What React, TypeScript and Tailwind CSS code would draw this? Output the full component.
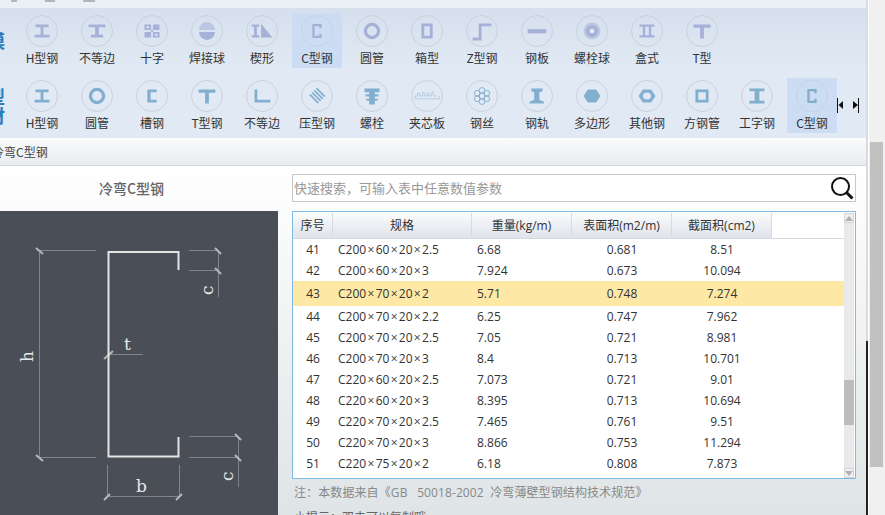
import type { ReactNode } from 'react';

const cjk = 'font-["Noto_Sans_CJK_SC","Noto_Sans",sans-serif]';

// 截面小图标，统一 32x32
const shapes: Record<string, ReactNode> = {
    h: <path d="M9 9h14v3h-5.500v8H24v3H8v-3h6.500v-8H9z" />,
    unequal: <path d="M7 9h18v3h-7v8h4.500v3h-13v-3H14v-8H7z" />,
    cross: <path fillRule="evenodd" d="M8 9h16v14H8zM15 9v14h2V9zM8 15v2h16v-2zM10 11v2h3v-2zM19 19v2h3v-2z" />,
    ball: <>
        <path d="M7.500 15a8.500 8.500 0 0 1 17 0z" opacity="0.55" />
        <path d="M7.500 17a8.500 8.500 0 0 0 17 0z" />
    </>,
    wedge: <path d="M5 9h8v2.500h-2.500v9H13V23H5v-2.500h2.500v-9H5zM15 8l12 15H15z" />,
    c: <path d="M11 8.500h10v4.500h-2.500v-2h-5v10h5v-2H21v4.500H11z" />,
    tube: <circle cx="16" cy="16" r="7" fill="none" stroke="currentColor" strokeWidth="3.5" />,
    box: <path fillRule="evenodd" d="M10 8h12v16H10zM13 11v10h6V11z" />,
    z: <path d="M6 25h6.500V10H26v3h-10.500v15H6z" transform="translate(0 -2)" />,
    plate: <rect x="6" y="14" width="20" height="4.500" />,
    boltball: <>
        <circle cx="16" cy="16" r="9" opacity="0.55" />
        <circle cx="16" cy="16" r="6.500" />
        <circle cx="16" cy="16" r="2.500" fill="#e4ecf5" />
    </>,
    boxbeam: <path d="M8 9h16v2.500h-3.500v9H24V23H8v-2.500h3.500v-9H8zM14 11.500v9h4v-9z" fillRule="evenodd" />,
    t: <path d="M7 9h18v3.500h-7V24h-4V12.500H7z" />,
    channel: <path d="M11 9h10v3h-6.500v8H21v3H11z" />,
    angle: <path d="M8 9h3v11h14v3H8z" />,
    deck: <path transform="translate(32 0) scale(-1 1)" d="M7 16l9-9 1.300 1.300-9 9zM9.300 18.300l9-9 1.300 1.300-9 9zM11.600 20.600l9-9 1.300 1.300-9 9zM13.900 22.900l9-9 1.300 1.300-9 9z" />,
    bolt: <path d="M8 8h16v4H19v2h4v2.500h-4V19h3v2h-3v4h-6v-4h-3v-2h3v-2.500H9V14h4v-2H8z" />,
    sandwich: <path fill="none" stroke="currentColor" strokeWidth="0.8" opacity="0.6" d="M3 19h26M3 16h3v-3h2v3h3v-4h2v4h3v-3h2v3h3v-4h2v4h3M3 19v-3M29 19v-3" />,
    wire: <g fill="none" stroke="currentColor" strokeWidth="1">
        <circle cx="16" cy="16" r="3" /><circle cx="16" cy="10" r="3" /><circle cx="16" cy="22" r="3" />
        <circle cx="10.800" cy="13" r="3" /><circle cx="21.200" cy="13" r="3" />
        <circle cx="10.800" cy="19" r="3" /><circle cx="21.200" cy="19" r="3" />
    </g>,
    rail: <path d="M10 8h12v3l-3.500 1v8l5 2v2H8v-2l5-2v-8l-3-1z" />,
    hex: <path d="M11.500 9h9l4.500 7-4.500 7h-9L7 16z" />,
    hexring: <path fillRule="evenodd" d="M11.500 9h9l4.500 7-4.500 7h-9L7 16zM13.500 12.500l-2.300 3.500 2.300 3.500h5l2.300-3.500-2.300-3.500z" />,
    square: <path fillRule="evenodd" d="M9 9h14v14H9zM12 12v8h8v-8z" />,
    ibeam: <path d="M8 8h16v3h-5.500v10H24v3H8v-3h5.500V11H8z" />,
};

const topRow = [
    ['h', 'H型钢'], ['unequal', '不等边'], ['cross', '十字'], ['ball', '焊接球'], ['wedge', '楔形'],
    ['c', 'C型钢', 1], ['tube', '圆管'], ['box', '箱型'], ['z', 'Z型钢'], ['plate', '钢板'],
    ['boltball', '螺栓球'], ['boxbeam', '盒式'], ['t', 'T型'],
] as [string, string, number?][];

const bottomRow = [
    ['h', 'H型钢'], ['tube', '圆管'], ['channel', '槽钢'], ['t', 'T型钢'], ['angle', '不等边'],
    ['deck', '压型钢'], ['bolt', '螺栓'], ['sandwich', '夹芯板'], ['wire', '钢丝'], ['rail', '钢轨'],
    ['hex', '多边形'], ['hexring', '其他钢'], ['square', '方钢管'], ['ibeam', '工字钢'], ['c', 'C型钢', 1],
] as [string, string, number?][];

const rows = [
    ['41', 'C200×60×20×2.5', '6.68', '0.681', '8.51'],
    ['42', 'C200×60×20×3', '7.924', '0.673', '10.094'],
    ['43', 'C200×70×20×2', '5.71', '0.748', '7.274'],
    ['44', 'C200×70×20×2.2', '6.25', '0.747', '7.962'],
    ['45', 'C200×70×20×2.5', '7.05', '0.721', '8.981'],
    ['46', 'C200×70×20×3', '8.4', '0.713', '10.701'],
    ['47', 'C220×60×20×2.5', '7.073', '0.721', '9.01'],
    ['48', 'C220×60×20×3', '8.395', '0.713', '10.694'],
    ['49', 'C220×70×20×2.5', '7.465', '0.761', '9.51'],
    ['50', 'C220×70×20×3', '8.866', '0.753', '11.294'],
    ['51', 'C220×75×20×2', '6.18', '0.808', '7.873'],
];

function ShapeCell({ shape, label, active, tone }: { shape: string; label: string; active?: number; tone: string }) {
    return (
        <div className={`flex h-[55px] w-[50px] flex-col items-center pt-[2px] ${active ? 'bg-[#ccdcf2]' : ''}`}>
            <div className={`h-[32px] w-[32px] rounded-full border ${active ? 'border-[#c4d2e6]' : 'border-[#cbd1dc]'}`}>
                <svg viewBox="0 0 32 32" className={`h-[30px] w-[30px] ${tone}`} fill="currentColor">
                    {shapes[shape]}
                </svg>
            </div>
            <span className="mt-[3px] whitespace-nowrap text-[12px] leading-[16px] text-[#333]">{label}</span>
        </div>
    );
}

function SideLabel({ children }: { children: ReactNode }) {
    return (
        <div className="mr-[12px] flex h-[55px] w-[5px] items-center justify-end overflow-hidden">
            <div className="w-[18px] shrink-0 text-[18px] font-bold leading-[19px] text-[#2b7dbb]">{children}</div>
        </div>
    );
}

function SectionDrawing() {
    const dim = '#80838a';
    const tick = '#b5b7bb';
    return (
        <svg viewBox="0 211 278 304" className="h-full w-full">
            <g stroke={dim} strokeWidth="1" fill="none">
                <path d="M39.500 250V458M39 250.500H96M39 457.500H96" />
                <path d="M189 250.500H218M189 270.500H218M218.500 250V297" />
                <path d="M189 436.500H238M189 457.500H238M238.500 436V487" />
                <path d="M108 354.500H143" />
                <path d="M107.500 465V497M179.500 465V497M107 496.500H180" />
            </g>
            <g stroke={tick} strokeWidth="2" fill="none">
                <path d="M36 248L43 254M36 455L43 461" />
                <path d="M215 248L221 254M215 268L221 274" />
                <path d="M235 434L241 440M235 455L241 461" />
                <path d="M104 359L113 351M104 500L110 494M176 500L182 494" />
            </g>
            <path d="M178.500 270V252H108.500V456.500H178.500V437" stroke="#e4e4e4" strokeWidth="2" fill="none" />
            <g fill="#e8e8e8" fontFamily="'DejaVu Serif',serif" fontSize="17">
                <text x="124" y="350">t</text>
                <text x="136" y="492">b</text>
                <text transform="translate(33 362) rotate(-90)">h</text>
                <text transform="translate(213 295) rotate(-90)">c</text>
                <text transform="translate(233 481) rotate(-90)">c</text>
            </g>
        </svg>
    );
}

// 乘号在原图里比 Open Sans 的宽一点
function Spec({ value }: { value: string }) {
    return (
        <>
            {value.split('×').map((part, index) => (
                <span key={index}>
                    {index > 0 && <span className="px-[1.3px]">×</span>}
                    {part}
                </span>
            ))}
        </>
    );
}

export default function App() {
    return (
        <div className={`flex h-[515px] w-[885px] overflow-hidden bg-white ${cjk}`}>
            <div className="flex w-[866px] shrink-0 flex-col">
                {/* 顶部菜单被裁掉，只剩一点笔画 */}
                <div className="flex h-[8px] gap-[28px] bg-[#ebf0f6] pl-[11px]">
                    <div className="h-[2px] w-[6px] bg-[#b0b5bc]" />
                    <div className="h-[2px] w-[10px] bg-[#b0b5bc]" />
                    <div className="h-[2px] w-[12px] bg-[#b0b5bc]" />
                </div>

                <div className="flex h-[130px] flex-col gap-[10px] bg-gradient-to-b from-[#d6e0ed] via-[#e1eaf4] to-[#e1eaf4] py-[5px]">
                    <div className="flex">
                        <SideLabel>模</SideLabel>
                        <div className="flex gap-[5px]">
                            {topRow.map(([shape, label, active]) => (
                                <ShapeCell key={label} shape={shape} label={label} active={active} tone="text-[#a6b0d8]" />
                            ))}
                        </div>
                    </div>
                    <div className="flex">
                        <SideLabel>型<br />材</SideLabel>
                        <div className="flex gap-[5px]">
                            {bottomRow.map(([shape, label, active]) => (
                                <ShapeCell key={label} shape={shape} label={label} active={active} tone="text-[#82aecf]" />
                            ))}
                        </div>
                        <svg viewBox="0 0 23 15" className="mt-[20px] h-[15px] w-[23px]" fill="#111">
                            <rect x="0" y="0" width="1" height="15" />
                            <path d="M6 3v8L1.500 7z" />
                            <path d="M16 3v8l5-4z" />
                            <rect x="21" y="0" width="1" height="15" />
                        </svg>
                    </div>
                </div>

                <div className="flex h-[28px] shrink-0 items-center border-b border-[#d3d7da] bg-gradient-to-b from-[#fbfcfd] to-[#e8ebef]">
                    <span className="-ml-2 text-[12px] text-[#444]">冷弯C型钢</span>
                </div>

                <div className="flex min-h-0 flex-1 bg-gradient-to-b from-white to-[#dfe4e6]">
                    <div className="flex w-[278px] shrink-0 flex-col">
                        <div className="flex h-[45px] shrink-0 items-center justify-center pr-[15px] text-[14px] font-medium text-[#666]">
                            冷弯C型钢
                        </div>
                        <div className="min-h-0 flex-1 bg-[#4a4e57]">
                            <SectionDrawing />
                        </div>
                    </div>

                    <div className="ml-[14px] w-[564px] shrink-0 pt-[8px]">
                        <div className="flex h-[28px] items-center justify-between border border-[#c8c8c8] bg-white pl-[1px] pr-[1px]">
                            <span className="text-[13px] text-[#999]">快速搜索，可输入表中任意数值参数</span>
                            <svg viewBox="0 0 24 24" className="h-[24px] w-[24px]" fill="none" stroke="#111">
                                <circle cx="10.500" cy="10.500" r="8.500" strokeWidth="2" />
                                <path d="M16.500 16.500L22.500 22.500" strokeWidth="3" />
                            </svg>
                        </div>

                        <div className='mt-[9px] flex h-[268px] overflow-hidden border border-[#7fb8e0] bg-white pt-[1px] font-["Open_Sans","Noto_Sans_CJK_SC",sans-serif]'>
                            <div className="w-[551px] shrink-0 overflow-hidden">
                                <div className="flex h-[26px] items-stretch border-b border-[#d5d8dd] text-[12px] text-[#333]">
                                    {[['序号', 'w-[40px]'], ['规格', 'w-[139px]'], ['重量(kg/m)', 'w-[100px]'], ['表面积(m2/m)', 'w-[100px]'], ['截面积(cm2)', 'w-[100px]']].map(([name, width]) => (
                                        <div key={name} className={`flex items-center justify-center border-r border-[#d8dbe0] bg-gradient-to-b from-[#fafbfc] to-[#dfe3ea] ${width}`}>
                                            {name}
                                        </div>
                                    ))}
                                </div>
                                {rows.map((row) => (
                                    <div
                                        key={row[0]}
                                        className={`flex items-center text-[12px] text-[#333] ${row[0] === '43' ? 'h-[25px] bg-[#fde8a5]' : 'h-[21px]'}`}
                                    >
                                        <div className="w-[40px] text-center">{row[0]}</div>
                                        <div className="w-[139px] pl-[5px]"><Spec value={row[1]} /></div>
                                        <div className="w-[100px] pl-[5px]">{row[2]}</div>
                                        <div className="w-[100px] text-center">{row[3]}</div>
                                        <div className="w-[100px] text-center">{row[4]}</div>
                                    </div>
                                ))}
                            </div>
                            <div className="mr-[1px] flex w-[10px] shrink-0 flex-col bg-[#e9e9e9]">
                                <div className="flex h-[10px] shrink-0 items-center justify-center border border-[#d5d5d5] bg-[#efefef]">
                                    <svg viewBox="0 0 8 5" className="h-[5px] w-[8px]" fill="#b0b0b0"><path d="M4 0l4 5H0z" /></svg>
                                </div>
                                <div className="min-h-0 flex-1 pt-[157px]">
                                    <div className="h-[45px] bg-[#bdbdbd]" />
                                </div>
                                <div className="flex h-[10px] shrink-0 items-center justify-center border border-[#d5d5d5] bg-[#efefef]">
                                    <svg viewBox="0 0 8 5" className="h-[5px] w-[8px]" fill="#b0b0b0"><path d="M4 5L8 0H0z" /></svg>
                                </div>
                            </div>
                        </div>

                        <div className='mt-[5px] whitespace-pre pl-[2px] font-["Open_Sans","Noto_Sans_CJK_SC",sans-serif] text-[12px] leading-[18px] tracking-[0.1px] text-[#888]'>
                            注：本数据来自《GB   50018-2002  冷弯薄壁型钢结构技术规范》
                        </div>
                        <div className="mt-[6px] pl-[2px] text-[12px] leading-[18px] text-[#666]">小提示：双击可以复制哦</div>
                    </div>
                </div>
            </div>

            <div className="flex w-[3px] shrink-0 flex-col">
                <div className="h-[341px] w-[2px] bg-[#d6dce2]" />
                <div className="w-[2px] flex-1 bg-[#222]" />
            </div>
            <div className="w-[16px] shrink-0 bg-[#f0f0f0] pl-[1px] pr-[2px] pt-[142px]">
                <div className="h-[325px] bg-[#c1c1c1]" />
            </div>
        </div>
    );
}
